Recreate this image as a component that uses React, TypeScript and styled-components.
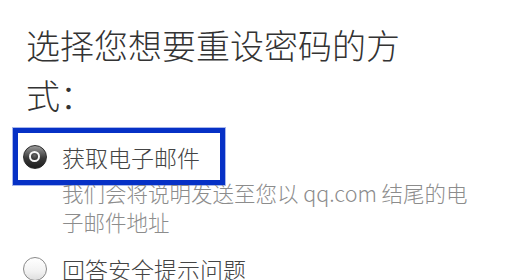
import React from "react";
import styled, { createGlobalStyle } from "styled-components";

const GlobalStyle = createGlobalStyle`
  html, body {
    margin: 0;
    padding: 0;
    background: #ffffff;
    overflow: hidden;
  }
  body {
    font-family: "Noto Sans CJK SC", "Noto Sans", sans-serif;
  }
`;

const Page = styled.div`
  width: 510px;
  height: 280px;
  padding-top: 20px;
  box-sizing: border-box;
  overflow: hidden;
`;

const Title = styled.h1`
  margin: 0 0 13px 26px;
  width: 412px;
  font-size: 34px;
  line-height: 50px;
  font-weight: 300;
  color: #333333;
  font-feature-settings: "halt";
`;

const OptionRow = styled.label<{ $focused?: boolean }>`
  display: flex;
  align-items: center;
  gap: 15px;
  width: fit-content;
  height: 47px;
  margin-left: 18px;
  margin-top: ${(p) => (p.$focused ? "0" : "9px")};
  padding: 0 20px 0 5px;
  box-sizing: border-box;
  outline: ${(p) => (p.$focused ? "5px solid #0631c6" : "none")};
  box-shadow: ${(p) => (p.$focused ? "0 0 0 6px rgba(6, 49, 198, 0.35)" : "none")};
`;

const Radio = styled.span<{ $checked?: boolean }>`
  position: relative;
  flex: none;
  width: 24px;
  height: 24px;
  border-radius: 50%;
  box-sizing: border-box;
  border: 1px solid ${(p) => (p.$checked ? "#2e2e2e" : "#8a8a8a")};
  background: ${(p) =>
    p.$checked
      ? "linear-gradient(#9a9a9a, #3a3a3a 55%, #1e1e1e)"
      : "linear-gradient(#ffffff, #f2f2f2 60%, #dedede)"};

  &::after {
    content: "";
    display: ${(p) => (p.$checked ? "block" : "none")};
    position: absolute;
    left: 50%;
    top: 50%;
    width: 7px;
    height: 7px;
    margin: -6px 0 0 -6px;
    border-radius: 50%;
    border: 2.5px solid #f7f7f7;
    background: radial-gradient(circle at 50% 35%, #6a6a6a, #1a1a1a);
  }
`;

const OptionText = styled.span`
  font-size: 23px;
  line-height: 30px;
  font-weight: 300;
  color: #444444;
  white-space: nowrap;
`;

const Description = styled.p`
  margin: -2px 0 0 62px;
  width: 420px;
  font-size: 21.5px;
  line-height: 29px;
  font-weight: 300;
  color: #8c8c8c;
`;

export default function App() {
  return (
    <>
      <GlobalStyle />
      <Page>
        <Title>选择您想要重设密码的方式：</Title>
        <OptionRow $focused>
          <Radio $checked />
          <OptionText>获取电子邮件</OptionText>
        </OptionRow>
        <Description>我们会将说明发送至您以 qq.com 结尾的电子邮件地址</Description>
        <OptionRow>
          <Radio />
          <OptionText>回答安全提示问题</OptionText>
        </OptionRow>
      </Page>
    </>
  );
}
